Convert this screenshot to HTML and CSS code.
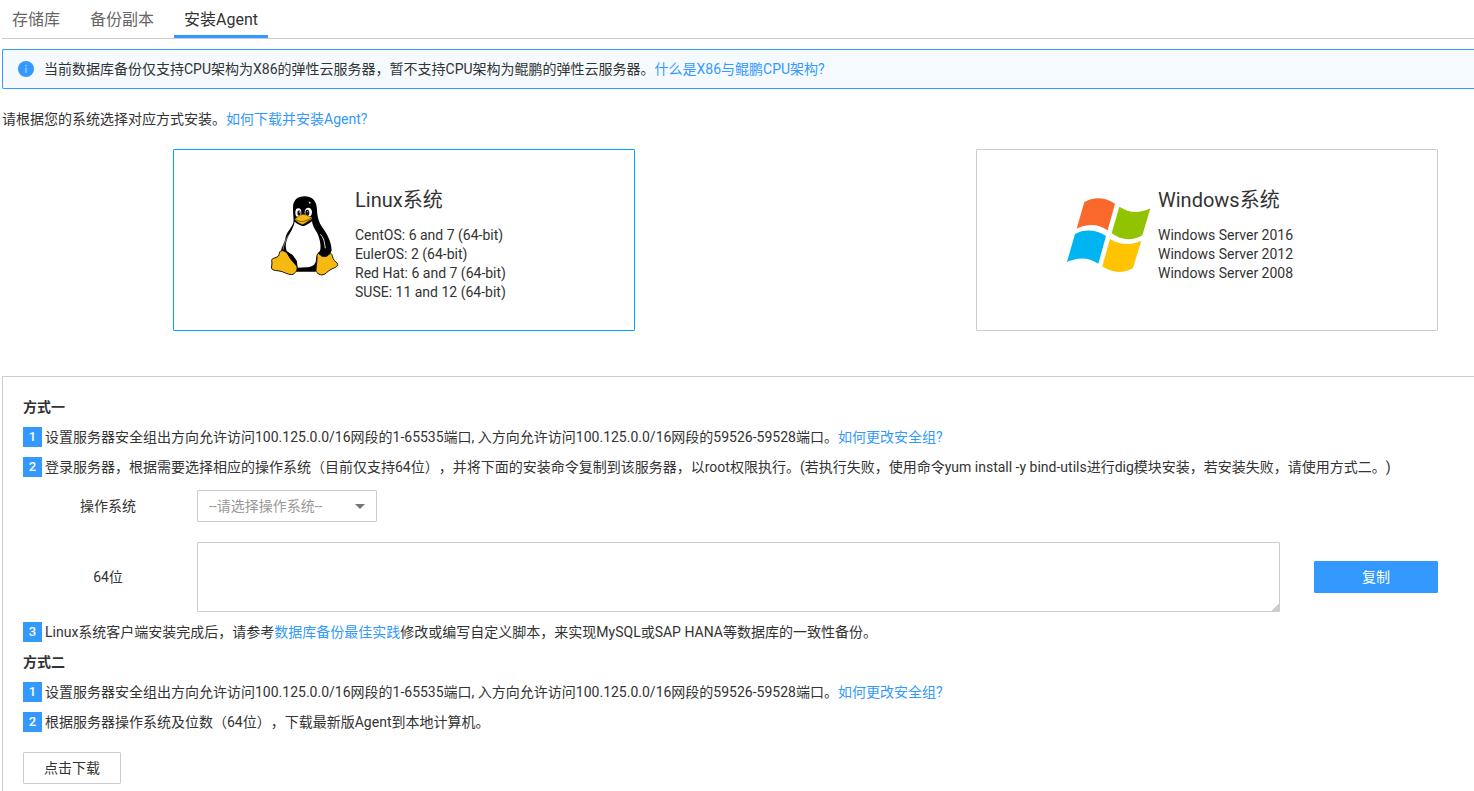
FILE: index.html
```html
<!DOCTYPE html>
<html lang="zh-CN">
<head>
<meta charset="utf-8">
<meta name="viewport" content="width=device-width, initial-scale=1">
<title>安装Agent</title>
<link rel="stylesheet" href="styles.css">
</head>
<body>
<nav class="tabs">
  <a class="tab" href="#vaults">存储库</a>
  <a class="tab" href="#backups">备份副本</a>
  <a class="tab tab-active" href="#agent" aria-current="page">安装Agent</a>
</nav>

<main>
  <div class="notice">
    <svg class="notice-icon" viewBox="0 0 16 16" aria-hidden="true">
      <circle cx="8" cy="8" r="8" fill="#3399ff"/>
      <rect x="7.5" y="6.5" width="1" height="5.5" fill="#cfe6ff"/>
      <rect x="7.5" y="4" width="1" height="1.2" fill="#cfe6ff"/>
    </svg>
    <p>当前数据库备份仅支持CPU架构为X86的弹性云服务器，暂不支持CPU架构为鲲鹏的弹性云服务器。<a href="#arch">什么是X86与鲲鹏CPU架构?</a></p>
  </div>

  <p class="intro">请根据您的系统选择对应方式安装。<a href="#howto">如何下载并安装Agent?</a></p>

  <div class="systems">
    <button type="button" class="system system-selected" aria-pressed="true">
      <svg class="system-icon" viewBox="0 0 252 252" aria-hidden="true">
        <g transform="translate(-8 -37)">
          <path d="M98 84C97 59 111 47 133 47C157 47 169 62 170 87C171 110 175 124 188 143C202 163 213 184 214 209L207 226L178 262L165 273L108 273L98 264L62 211C63 199 73 186 75 174C77 155 94 142 99 126C101 116 98 104 98 84Z" fill="#000"/>
          <path d="M103 123C112 130 121 136 130 136C139 135 147 127 155 122C157 139 167 149 173 162C179 179 183 196 179 211C169 217 168 231 166 244C162 256 151 259 137 260L112 261L110 243L96 225L79 211C76 202 75 194 78 183C83 164 97 150 103 123Z" fill="#fff"/>
          <path d="M96 150C89 160 77 171 74 186C71 193 68 200 69 207" fill="none" stroke="#fff" stroke-width="1.5"/>
          <path d="M180 161C188 169 192 180 193 191L195 203" fill="none" stroke="#fff" stroke-width="2.5"/>
          <path d="M78 211L97 223L109 240L110 248L103 249L88 230Z" fill="#000"/>
          <ellipse cx="114" cy="96" rx="9" ry="13" fill="#fff"/>
          <ellipse cx="144" cy="95" rx="11" ry="14" fill="#fff"/>
          <ellipse cx="116" cy="97" rx="5" ry="8" fill="#111"/>
          <ellipse cx="141" cy="96" rx="6" ry="9" fill="#111"/>
          <circle cx="118" cy="94" r="2" fill="#bbb"/>
          <circle cx="142" cy="93" r="2" fill="#bbb"/>
          <path d="M145 62L153 67L147 69Z" fill="#ddd"/>
          <path d="M104 114C111 111 117 102 127 101C136 100 145 107 154 110C157 115 150 119 143 122C136 126 130 133 124 131C117 129 110 123 104 118Z" fill="#f6b911" stroke="#2b2000" stroke-width="1.5"/>
          <path d="M106 117C115 121 123 124 130 122C138 119 145 117 152 113" fill="none" stroke="#3d2c00" stroke-width="2"/>
          <path d="M61 211C68 208 75 212 80 217L91 235L108 255C114 264 108 275 98 281C86 284 73 275 62 272C51 269 38 271 34 264C32 258 37 249 34 240C33 232 46 233 53 227C59 222 55 214 61 211Z" fill="#f6b911" stroke="#111" stroke-width="3" stroke-linejoin="round"/>
          <path d="M170 224C172 218 175 217 179 222C185 230 200 230 207 220C212 216 215 220 216 227C219 238 225 243 232 249C234 255 226 260 219 263C207 267 201 275 192 281C182 286 168 279 167 269C167 256 171 241 170 224Z" fill="#f6b911" stroke="#111" stroke-width="3" stroke-linejoin="round"/>
        </g>
      </svg>
      <span class="system-body">
        <span class="system-name">Linux系统</span>
        <span class="system-line">CentOS: 6 and 7 (64-bit)</span>
        <span class="system-line">EulerOS: 2 (64-bit)</span>
        <span class="system-line">Red Hat: 6 and 7 (64-bit)</span>
        <span class="system-line">SUSE: 11 and 12 (64-bit)</span>
      </span>
    </button>

    <button type="button" class="system" aria-pressed="false">
      <svg class="system-icon" viewBox="0 0 252 252" aria-hidden="true">
        <g transform="translate(-48 -39)">
          <path d="M103 66C130 50 163 50 195 71L173 151C143 131 112 131 80 146Z" fill="#fa682c"/>
          <path d="M208 80C240 101 271 99 301 85L277 166C247 183 215 182 185 160Z" fill="#91c300"/>
          <path d="M75 162C104 147 136 148 168 168L145 251C115 231 83 231 51 246Z" fill="#00b4f1"/>
          <path d="M180 177C211 196 241 197 274 182L249 264C220 281 188 280 157 259Z" fill="#ffc300"/>
        </g>
      </svg>
      <span class="system-body">
        <span class="system-name">Windows系统</span>
        <span class="system-line">Windows Server 2016</span>
        <span class="system-line">Windows Server 2012</span>
        <span class="system-line">Windows Server 2008</span>
      </span>
    </button>
  </div>

  <section class="panel">
    <h2 class="method">方式一</h2>
    <p class="step"><span class="badge">1</span><span>设置服务器安全组出方向允许访问100.125.0.0/16网段的1-65535端口, 入方向允许访问100.125.0.0/16网段的59526-59528端口。<a href="#group">如何更改安全组?</a></span></p>
    <p class="step"><span class="badge">2</span><span>登录服务器，根据需要选择相应的操作系统（目前仅支持64位），并将下面的安装命令复制到该服务器，以root权限执行。(若执行失败，使用命令yum install -y bind-utils进行dig模块安装，若安装失败，请使用方式二。)</span></p>

    <div class="field">
      <label class="field-label" for="os">操作系统</label>
      <div class="select-wrap">
        <select class="select" id="os">
          <option>--请选择操作系统--</option>
        </select>
      </div>
    </div>
    <div class="field field-command">
      <label class="field-label" for="command">64位</label>
      <textarea class="command" id="command"></textarea>
      <button type="button" class="button button-primary">复制</button>
    </div>

    <p class="step"><span class="badge">3</span><span>Linux系统客户端安装完成后，请参考<a href="#practice">数据库备份最佳实践</a>修改或编写自定义脚本，来实现MySQL或SAP HANA等数据库的一致性备份。</span></p>
    <h2 class="method">方式二</h2>
    <p class="step"><span class="badge">1</span><span>设置服务器安全组出方向允许访问100.125.0.0/16网段的1-65535端口, 入方向允许访问100.125.0.0/16网段的59526-59528端口。<a href="#group">如何更改安全组?</a></span></p>
    <p class="step"><span class="badge">2</span><span>根据服务器操作系统及位数（64位），下载最新版Agent到本地计算机。</span></p>
    <button type="button" class="button button-download">点击下载</button>
  </section>
</main>
</body>
</html>
```
FILE: styles.css
```css
* {
  box-sizing: border-box;
}

body {
  margin: 0;
  padding-left: 2px;
  background: #fff;
  color: #333;
  font: 14px/20px Roboto, "Noto Sans CJK SC", sans-serif;
  text-spacing-trim: space-all;
}

p,
h2 {
  margin: 0;
}

a {
  color: #3399ff;
  text-decoration: none;
}

button,
select,
textarea {
  font: inherit;
  color: inherit;
}

.tabs {
  display: flex;
  gap: 10px;
  border-bottom: 1px solid #ccc;
}

.tab {
  padding: 4px 10px 0;
  border-bottom: 3px solid transparent;
  color: #666;
  font-size: 16px;
  line-height: 31px;
}

.tab-active {
  border-bottom-color: #3399ff;
  color: #333;
}

.notice {
  display: flex;
  align-items: center;
  gap: 10px;
  margin-top: 10px;
  padding: 9px 15px;
  border: 1px solid #3399ff;
  border-right: 0;
  border-radius: 2px 0 0 2px;
  background: #f5faff;
}

.notice-icon {
  flex: none;
  width: 16px;
  height: 16px;
}

.intro {
  margin-top: 20px;
}

.systems {
  display: flex;
  justify-content: space-between;
  gap: 20px;
  margin: 20px 36px 45px 171px;
}

.system {
  display: flex;
  flex: 0 1 462px;
  align-items: flex-start;
  gap: 8px;
  min-height: 182px;
  padding: 35px 10px 28px 89px;
  border: 1px solid #ccc;
  border-radius: 1px;
  background: #fff;
  text-align: left;
}

.system-selected {
  border-color: #00a4ff;
}

.system-icon {
  flex: none;
  width: 84px;
  height: 84px;
  margin-top: 8px;
}

.system-name,
.system-line {
  display: block;
  line-height: 19px;
}

.system-name {
  margin-bottom: 11px;
  font-size: 20px;
  line-height: 30px;
}

.panel {
  padding: 15px 0 7px 20px;
  border: 1px solid #ccc;
  border-width: 1px 0 0 1px;
}

.method,
.step {
  font-size: 14px;
  line-height: 30px;
}

.step {
  display: flex;
  align-items: flex-start;
  gap: 3px;
}

.badge {
  flex: none;
  width: 19px;
  height: 20px;
  margin-top: 5px;
  background: #3399ff;
  color: #fff;
  font-size: 13px;
  font-weight: 500;
  line-height: 20px;
  text-align: center;
}

.field {
  display: flex;
  align-items: center;
  margin-top: 8px;
}

.field-label {
  flex: none;
  width: 170px;
  margin-right: 4px;
  text-align: center;
}

.field-command {
  margin: 20px 36px 5px 0;
}

.select-wrap {
  position: relative;
  width: 180px;
}

.select-wrap::after {
  position: absolute;
  top: 14px;
  right: 12px;
  width: 10px;
  height: 5px;
  background: #777;
  clip-path: polygon(0 0, 100% 0, 50% 100%);
  content: "";
  pointer-events: none;
}

.select {
  display: block;
  width: 100%;
  height: 32px;
  padding: 0 30px 0 11px;
  border: 1px solid #ccc;
  border-radius: 1px;
  background: #fff;
  color: #999;
  appearance: none;
}

.command {
  flex: 1;
  min-width: 0;
  height: 70px;
  padding: 5px 10px;
  border: 1px solid #ccc;
  border-radius: 1px;
  resize: both;
}

.command::-webkit-resizer {
  background: linear-gradient(135deg, transparent 75%, #ccc 75%);
}

.button {
  height: 32px;
  padding: 0 20px;
  border: 1px solid #ccc;
  border-radius: 1px;
  background: #fff;
}

.button-primary {
  flex: none;
  width: 124px;
  margin-left: 34px;
  border-color: #3399ff;
  background: #3399ff;
  color: #fff;
}

.button-download {
  margin-top: 15px;
}
```
